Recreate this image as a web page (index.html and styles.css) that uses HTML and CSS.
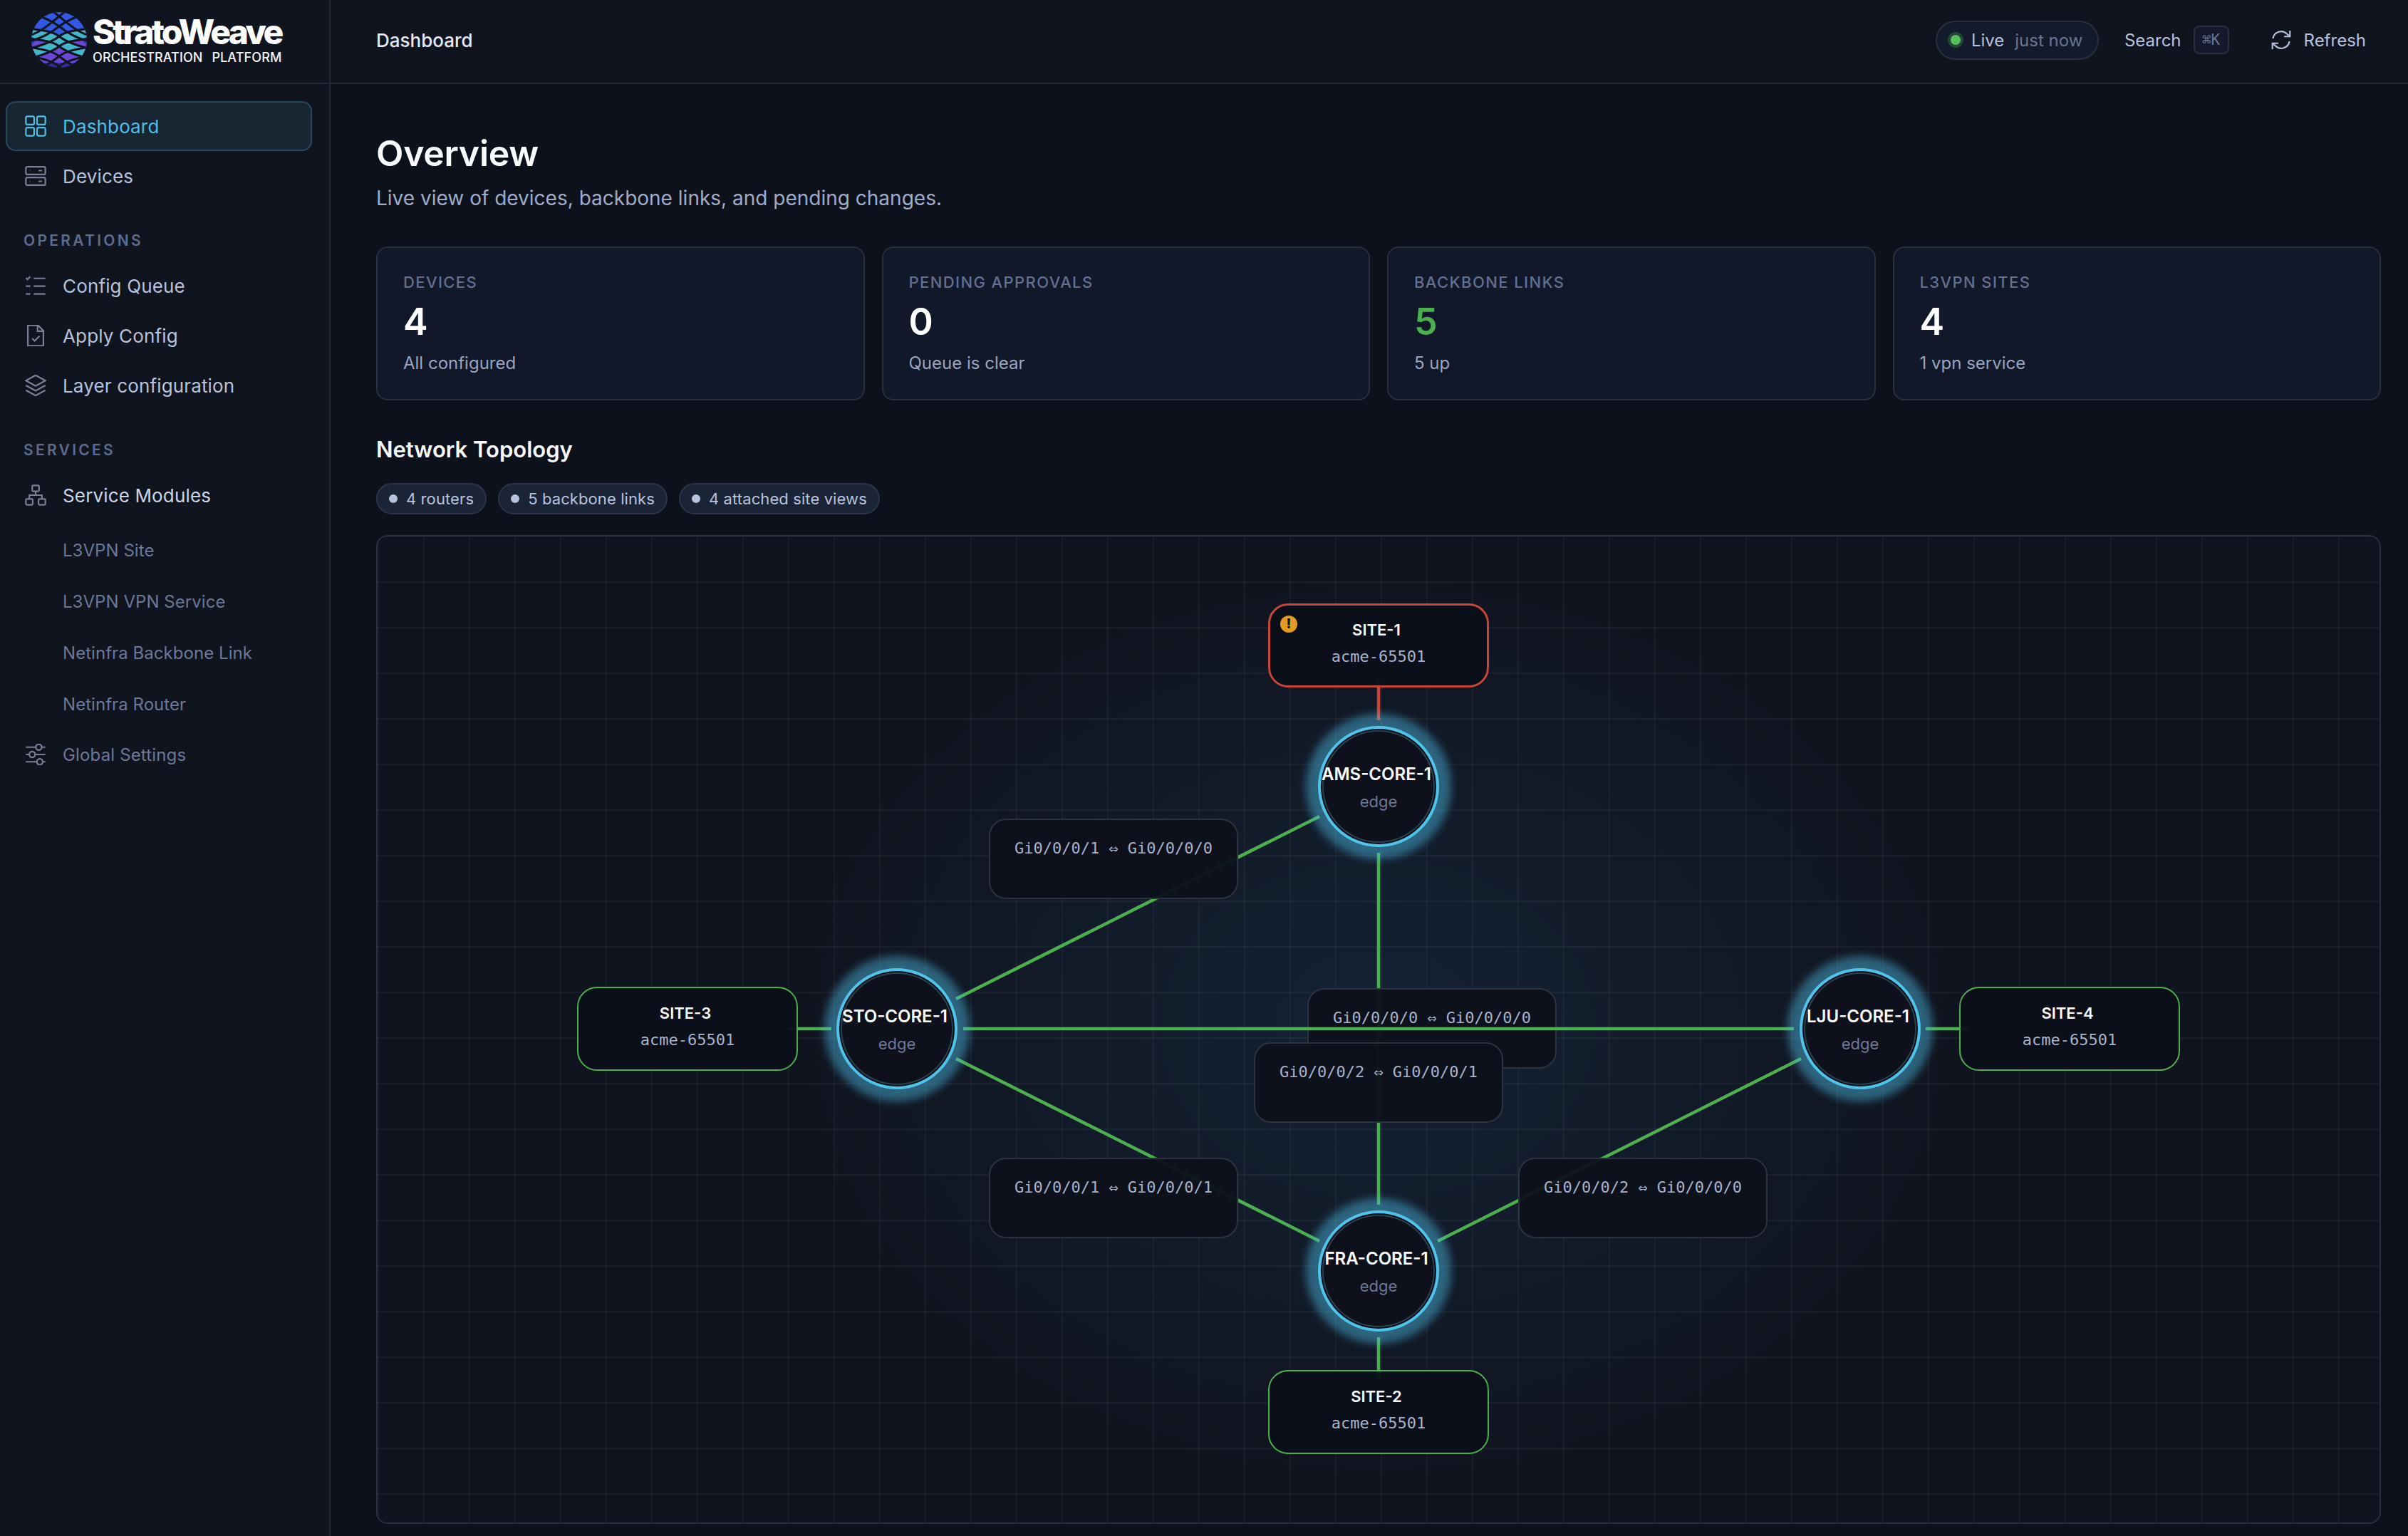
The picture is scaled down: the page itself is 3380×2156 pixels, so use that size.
FILE: index.html
```html
<!DOCTYPE html>
<html lang="en">
<head>
  <meta charset="UTF-8">
  <meta name="viewport" content="width=device-width, initial-scale=1.0">
  <title>StratoWeave - Dashboard</title>
  <link rel="stylesheet" href="styles.css">
</head>
<body>

<div class="app">
  <aside class="sidebar">
    <div class="brand">
      <svg class="brand-mark" viewBox="0 0 80 80">
        <defs>
          <clipPath id="globe"><circle cx="40" cy="40" r="39"/></clipPath>
          <g id="seps" fill="none">
            <path d="M-2 -22C15 -15 30 -1 40 7S65 29 82 34"/>
            <path d="M-2 2C15 7 30 13 40 21S65 38 82 42"/>
            <path d="M-2 24C15 27 30 27 40 35S65 48 82 52"/>
            <path d="M-2 38C15 41 30 41 40 49S65 62 82 66"/>
            <path d="M-2 50C15 53 30 55 40 63S65 80 82 88"/>
            <path d="M-2 62C15 66 30 69 40 77S65 98 82 105"/>
          </g>
          <path id="band" d="M-2 31C15 34 30 34 40 42S65 55 82 59" fill="none"/>
        </defs>
        <g clip-path="url(#globe)">
          <rect width="80" height="42" fill="#3358e6"/>
          <rect y="42" width="80" height="38" fill="#6a48d4"/>
          <rect y="72" width="80" height="8" fill="#34299a"/>
          <g stroke="#45b5c8" stroke-width="13">
            <use href="#band"/>
            <use href="#band" transform="matrix(-1 0 0 1 80 0)"/>
          </g>
          <path d="M0 34L8 41L0 48ZM80 34L72 41L80 48Z" fill="#2a3fa8"/>
          <g stroke="#10141f" stroke-width="3">
            <use href="#seps"/>
            <use href="#seps" transform="matrix(-1 0 0 1 80 0)"/>
          </g>
        </g>
      </svg>
      <div class="brand-text">
        <div class="brand-name">StratoWeave</div>
        <div class="brand-sub">ORCHESTRATION PLATFORM</div>
      </div>
    </div>

    <nav class="nav">
      <a class="nav-item active">
        <svg class="icon" viewBox="1 1 22 22"><rect x="2" y="2" width="8.500" height="8.500" rx="1.500"/><rect x="13.500" y="2" width="8.500" height="8.500" rx="1.500"/><rect x="2" y="13.500" width="8.500" height="8.500" rx="1.500"/><rect x="13.500" y="13.500" width="8.500" height="8.500" rx="1.500"/></svg>
        Dashboard
      </a>
      <a class="nav-item">
        <svg class="icon" viewBox="1 1 22 22"><rect x="2" y="2.500" width="20" height="8" rx="1.500"/><rect x="2" y="13.500" width="20" height="8" rx="1.500"/><path d="M6 6.500h.5M6 17.500h.5M15 6.500h3.500M15 17.500h3.500"/></svg>
        Devices
      </a>

      <div class="nav-label">Operations</div>
      <a class="nav-item">
        <svg class="icon" viewBox="1 1 22 22"><path d="M2 4l1.600 1.600L6.400 2.600M10 4.500h12M2 12.500h4.500M10 12.500h12M2 20.500h4.500M10 20.500h12"/></svg>
        Config Queue
      </a>
      <a class="nav-item">
        <svg class="icon" viewBox="1 1 22 22"><path d="M4 1.500h10.500L20 7v15.500H4zM14 1.500V7.500h6M8.500 15l2.500 2.500 5-5"/></svg>
        Apply Config
      </a>
      <a class="nav-item">
        <svg class="icon" viewBox="1 1 22 22"><path d="M12 1.500L22 7l-10 5.500L2 7zM2 12l10 5.500L22 12M2 17l10 5.500L22 17"/></svg>
        Layer configuration
      </a>

      <div class="nav-label">Services</div>
      <a class="nav-item bright">
        <svg class="icon" viewBox="1 1 22 22"><rect x="8.500" y="2" width="7" height="6" rx="1"/><rect x="2" y="16" width="7" height="6" rx="1"/><rect x="15" y="16" width="7" height="6" rx="1"/><path d="M12 8v4M5.500 16v-4h13v4"/></svg>
        Service Modules
      </a>
      <div class="sub-nav">
        <a class="sub-item">L3VPN Site</a>
        <a class="sub-item">L3VPN VPN Service</a>
        <a class="sub-item">Netinfra Backbone Link</a>
        <a class="sub-item">Netinfra Router</a>
      </div>
      <a class="nav-item muted">
        <svg class="icon" viewBox="1 1 22 22"><path d="M2 4.500h10M18.500 4.500H22M2 12h3.500M11.500 12H22M2 19.500h11M19.500 19.500H22"/><circle cx="15.200" cy="4.500" r="3"/><circle cx="8.500" cy="12" r="3"/><circle cx="16.300" cy="19.500" r="3"/></svg>
        Global Settings
      </a>
    </nav>
  </aside>

  <div class="content">
    <header class="topbar">
      <div class="crumb">Dashboard</div>
      <div class="top-actions">
        <div class="live-pill">
          <span class="live-dot"></span>
          <span class="live-text">Live</span>
          <span class="live-time">just now</span>
        </div>
        <div class="search">Search <kbd class="kbd">⌘K</kbd></div>
        <div class="refresh">
          <svg class="icon refresh-icon" viewBox="1 1 22 22"><path d="M3.500 10.500A8.500 8.500 0 0 1 18 6l3 2.500M21 2.500v6h-6M20.500 13.500A8.500 8.500 0 0 1 6 18l-3-2.500M3 21.500v-6h6"/></svg>
          Refresh
        </div>
      </div>
    </header>

    <main class="page">
      <h1 class="title">Overview</h1>
      <p class="subtitle">Live view of devices, backbone links, and pending changes.</p>

      <section class="cards">
        <div class="card">
          <div class="card-label">Devices</div>
          <div class="card-value">4</div>
          <div class="card-sub">All configured</div>
        </div>
        <div class="card">
          <div class="card-label">Pending Approvals</div>
          <div class="card-value">0</div>
          <div class="card-sub">Queue is clear</div>
        </div>
        <div class="card">
          <div class="card-label">Backbone Links</div>
          <div class="card-value green">5</div>
          <div class="card-sub">5 up</div>
        </div>
        <div class="card">
          <div class="card-label">L3VPN Sites</div>
          <div class="card-value">4</div>
          <div class="card-sub">1 vpn service</div>
        </div>
      </section>

      <h2 class="section-title">Network Topology</h2>
      <div class="pills">
        <span class="pill"><i class="pill-dot"></i>4 routers</span>
        <span class="pill"><i class="pill-dot"></i>5 backbone links</span>
        <span class="pill"><i class="pill-dot"></i>4 attached site views</span>
      </div>

      <div class="topology">
        <svg class="links" viewBox="0 0 2810 1384">
          <path class="link" d="M1322 393L812 649"/>
          <path class="link" d="M1405 444V938"/>
          <path class="link" d="M812 733L1322 989"/>
          <path class="link" d="M1998 733L1488 989"/>
          <path class="link bad" d="M1405 199V258"/>
          <path class="link" d="M1405 1124V1182"/>
          <path class="link" d="M577 691H637"/>
          <path class="link" d="M2173 691H2233"/>
        </svg>

        <div class="edge-label el-1">Gi0/0/0/1 ⇔ Gi0/0/0/0</div>
        <div class="edge-label el-2">Gi0/0/0/0 ⇔ Gi0/0/0/0</div>
        <svg class="links over" viewBox="0 0 2810 1384"><path class="link" d="M822 691H1988"/></svg>
        <div class="edge-label el-3">Gi0/0/0/2 ⇔ Gi0/0/0/1</div>
        <div class="edge-label el-4">Gi0/0/0/2 ⇔ Gi0/0/0/0</div>
        <div class="edge-label el-5">Gi0/0/0/1 ⇔ Gi0/0/0/1</div>

        <div class="site site-1 bad">
          <span class="warn">!</span>
          <div class="site-name">SITE-1</div>
          <div class="site-as">acme-65501</div>
        </div>
        <div class="site site-2">
          <div class="site-name">SITE-2</div>
          <div class="site-as">acme-65501</div>
        </div>
        <div class="site site-3">
          <div class="site-name">SITE-3</div>
          <div class="site-as">acme-65501</div>
        </div>
        <div class="site site-4">
          <div class="site-name">SITE-4</div>
          <div class="site-as">acme-65501</div>
        </div>

        <div class="router r-ams"><div class="router-name">AMS-CORE-1</div><div class="router-role">edge</div></div>
        <div class="router r-sto"><div class="router-name">STO-CORE-1</div><div class="router-role">edge</div></div>
        <div class="router r-lju"><div class="router-name">LJU-CORE-1</div><div class="router-role">edge</div></div>
        <div class="router r-fra"><div class="router-name">FRA-CORE-1</div><div class="router-role">edge</div></div>
      </div>
    </main>
  </div>
</div>

</body>
</html>
```

FILE: styles.css
```css
* {
  box-sizing: border-box;
}

html, body {
  height: 2156px;
  overflow: hidden;
}

body {
  margin: 0;
  background: #0d111c;
  color: #b8c2dc;
  font-family: Inter, "Noto Sans", sans-serif;
}

.app {
  display: flex;
  height: 2156px;
}

/* sidebar */
.sidebar {
  width: 464px;
  flex: none;
  background: #10141f;
  border-right: 2px solid #232834;
}

.brand {
  display: flex;
  align-items: center;
  gap: 7px;
  height: 118px;
  padding: 0 0 5px 43px;
  border-bottom: 2px solid #232834;
}

.brand-mark {
  width: 80px;
  height: 80px;
  flex: none;
}

.brand-name {
  color: #fff;
  font-size: 48px;
  font-weight: 800;
  line-height: 50px;
  letter-spacing: -3.7px;
}

.brand-sub {
  color: #f2f4fa;
  font-size: 18px;
  font-weight: 500;
  line-height: 22px;
  letter-spacing: 0.1px;
  word-spacing: 8px;
  white-space: nowrap;
}

.nav {
  padding: 24px 24px 0 8px;
}

.nav-item {
  display: flex;
  align-items: center;
  gap: 23px;
  height: 70px;
  padding: 0 25px;
  color: #b8c2dc;
  font-size: 26px;
  letter-spacing: 0.15px;
  border: 2px solid transparent;
  border-radius: 14px;
}

.nav-item.active {
  color: #4fbfe2;
  background: #182633;
  border-color: #28495c;
}

.nav-item.bright {
  color: #ccd5ea;
}

.nav-item.muted {
  color: #6c7898;
  font-size: 24px;
}

.icon {
  width: 30px;
  height: 30px;
  flex: none;
  fill: none;
  stroke: #7a8098;
  stroke-width: 1.6;
}

.active .icon {
  stroke: #4fbfe2;
}

.nav-label {
  height: 28px;
  margin: 42px 0 14px 25px;
  color: #5f6b8c;
  font-size: 21px;
  font-weight: 600;
  line-height: 28px;
  letter-spacing: 3.3px;
  text-transform: uppercase;
}

.sub-nav {
  margin-top: 6px;
}

.sub-item {
  display: flex;
  align-items: center;
  height: 72px;
  padding-left: 80px;
  color: #6c7898;
  font-size: 24px;
  letter-spacing: 0.05px;
}

/* top bar */
.content {
  flex: 1;
  min-width: 0;
}

.topbar {
  display: flex;
  align-items: center;
  justify-content: space-between;
  height: 118px;
  padding: 0 59px 4px 64px;
  background: #10141f;
  border-bottom: 2px solid #232834;
}

.crumb {
  color: #e6eaf5;
  font-size: 26px;
  font-weight: 500;
}

.top-actions {
  display: flex;
  align-items: center;
  font-size: 24px;
}

.live-pill {
  display: flex;
  align-items: center;
  width: 229px;
  height: 55px;
  padding-left: 19px;
  background: #131a2c;
  border: 2px solid #2a2f40;
  border-radius: 28px;
}

.live-dot {
  width: 14px;
  height: 14px;
  margin-right: 15px;
  background: #56c05c;
  border-radius: 50%;
  box-shadow: 0 0 0 4px rgba(76, 175, 80, 0.3);
}

.live-text {
  margin-right: 15px;
}

.live-time {
  color: #6a7594;
}

.search {
  display: flex;
  align-items: center;
  margin-left: 36px;
  gap: 17px;
}

.kbd {
  display: flex;
  align-items: center;
  justify-content: center;
  width: 50px;
  height: 40px;
  color: #6a7594;
  background: #141a2c;
  border: 2px solid #2a2f40;
  border-radius: 8px;
  font-family: "DejaVu Sans Mono", monospace;
  font-size: 21px;
}

.refresh {
  display: flex;
  align-items: center;
  gap: 17px;
  margin-left: 58px;
}

.refresh-icon {
  stroke: #b8c2dc;
}

/* page */
.page {
  padding: 67px 38px 0 64px;
}

.title {
  margin: 0;
  color: #fafbff;
  font-size: 50px;
  font-weight: 600;
  line-height: 60px;
  letter-spacing: -0.3px;
}

.subtitle {
  margin: 15px 0 0;
  color: #a0abc8;
  font-size: 28px;
  line-height: 36px;
}

.cards {
  display: grid;
  grid-template-columns: repeat(4, 1fr);
  gap: 24px;
  margin-top: 50px;
}

.card {
  height: 216px;
  padding: 34px 36px 0;
  background: #111829;
  border: 2px solid #2a2f40;
  border-radius: 16px;
}

.card-label {
  color: #646f90;
  font-size: 22px;
  font-weight: 500;
  line-height: 28px;
  letter-spacing: 1.4px;
  text-transform: uppercase;
}

.card-value {
  margin-top: 12px;
  color: #fff;
  font-size: 52px;
  font-weight: 600;
  line-height: 60px;
}

.card-value.green {
  color: #4caf50;
}

.card-sub {
  margin-top: 12px;
  color: #9aa5c0;
  font-size: 24px;
  line-height: 32px;
}

.section-title {
  margin: 50px 0 0;
  color: #fafbff;
  font-size: 31px;
  font-weight: 600;
  line-height: 38px;
}

.pills {
  display: flex;
  gap: 16px;
  margin-top: 28px;
}

.pill {
  display: flex;
  align-items: center;
  gap: 12px;
  height: 44px;
  padding: 0 16px;
  color: #b8c2dc;
  background: #1b2336;
  border: 2px solid #2c3448;
  border-radius: 22px;
  font-size: 22px;
  letter-spacing: 0.1px;
}

.pill-dot {
  width: 12px;
  height: 12px;
  background: #b8c2dc;
  border-radius: 50%;
}

/* topology canvas */
.topology {
  position: relative;
  height: 1388px;
  margin-top: 29px;
  border: 2px solid #2a2f40;
  border-radius: 16px;
  overflow: hidden;
  background:
    linear-gradient(rgba(255, 255, 255, 0.04) 2px, transparent 2px),
    linear-gradient(90deg, rgba(255, 255, 255, 0.04) 2px, transparent 2px),
    radial-gradient(ellipse 820px 640px at 1405px 691px, #142234 0, #10141f 100%);
  background-size: 64px 64px, 64px 64px, auto;
  background-position: 0 -1px, 0 0, 0 0;
}

.links {
  position: absolute;
  left: 0;
  top: 0;
  width: 2810px;
  height: 1384px;
}

.links.over {
  z-index: 2;
}

.link {
  fill: none;
  stroke: #4caf50;
  stroke-width: 4.5;
}

.link.bad {
  stroke: #c6453c;
}

.edge-label {
  position: absolute;
  z-index: 1;
  width: 350px;
  height: 113px;
  padding-top: 26px;
  color: #aab3cc;
  background: rgba(13, 17, 27, 0.95);
  border: 2px solid #2e3240;
  border-radius: 24px;
  font-family: "DejaVu Sans Mono", monospace;
  font-size: 22px;
  line-height: 28px;
  text-align: center;
}

.el-1 { left: 858px; top: 396px; }
.el-2 { left: 1305px; top: 634px; }
.el-3 { left: 1230px; top: 710px; z-index: 3; }
.el-4 { left: 1601px; top: 872px; }
.el-5 { left: 858px; top: 872px; }

.site {
  position: absolute;
  z-index: 3;
  width: 310px;
  height: 118px;
  padding-top: 21px;
  text-align: center;
  background: rgba(11, 15, 25, 0.95);
  border: 2.500px solid #4caf50;
  border-radius: 28px;
}

.site.bad {
  padding-top: 20px;
  border: 3px solid #c6453c;
}

.site-1 { left: 1250px; top: 94px; }
.site-2 { left: 1250px; top: 1170px; }
.site-3 { left: 280px; top: 632px; }
.site-4 { left: 2220px; top: 632px; }

.site-name {
  padding-right: 6px;
  color: #fafbff;
  font-size: 22px;
  font-weight: 600;
  line-height: 28px;
}

.site-as {
  margin-top: 10px;
  color: #aab3cc;
  font-family: "DejaVu Sans Mono", monospace;
  font-size: 22px;
  line-height: 28px;
}

.warn {
  position: absolute;
  left: 14px;
  top: 14px;
  width: 24px;
  height: 24px;
  color: #10141f;
  background: #e59a21;
  border-radius: 50%;
  font-size: 19px;
  font-weight: 800;
  line-height: 24px;
}

.router {
  position: absolute;
  z-index: 4;
  width: 170px;
  height: 170px;
  padding-top: 50px;
  text-align: center;
  background: #0e111c;
  border: 4px solid #4fc3e8;
  border-radius: 50%;
  box-shadow:
    0 0 12px 17px rgba(79, 190, 230, 0.46),
    inset 0 0 0 2px #0e111c,
    inset 0 0 0 4px #27414f;
}

.r-ams { left: 1320px; top: 266px; }
.r-sto { left: 644px; top: 606px; }
.r-lju { left: 1996px; top: 606px; }
.r-fra { left: 1320px; top: 946px; }

.router-name {
  margin: 0 -6px;
  padding-right: 6px;
  color: #fff;
  font-size: 24px;
  font-weight: 600;
  line-height: 28px;
  white-space: nowrap;
}

.router-role {
  margin-top: 10px;
  color: #6f7898;
  font-size: 22px;
  line-height: 28px;
}
```
